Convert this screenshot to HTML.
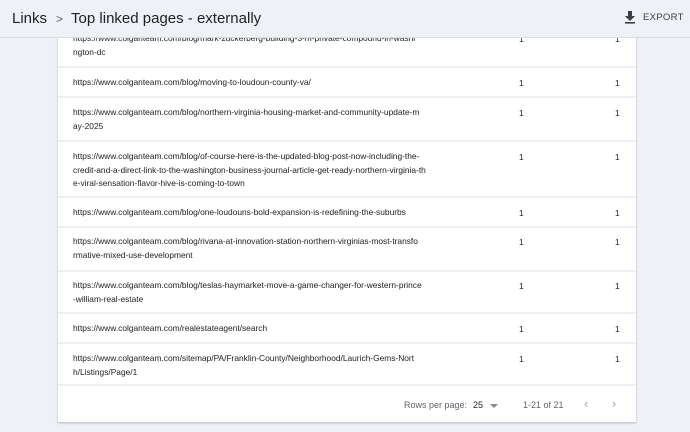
<!DOCTYPE html>
<html><head><style>
*{margin:0;padding:0;box-sizing:border-box}
body{width:690px;height:432px;background:#eef1f6;font-family:"Liberation Sans",sans-serif;position:relative;overflow:hidden;color:#202124}
.hdr{position:absolute;left:0;top:0;width:690px;height:38px;background:#eef1f6;border-bottom:1px solid #dadce0;z-index:2}
.crumb{position:absolute;left:12px;top:10px;font-size:15px;color:#202124}
.crumb .sep{color:#5f6368;font-size:12px;margin:0 8px 0 9px}
.exp{position:absolute;left:624px;top:12px;font-size:9.5px;color:#3c4043;letter-spacing:.3px}
.card{position:absolute;left:58px;top:20px;width:578px;height:402px;background:#fff;box-shadow:0 1px 2px rgba(0,0,0,.25)}
.row{position:absolute;left:58px;width:578px;border-bottom:2px solid #eceef0}
.row .u{position:absolute;left:15px;font-size:8.4px;line-height:13.5px;color:#202124;white-space:nowrap}
.row .a{position:absolute;left:461px;font-size:8.4px}
.row .b{position:absolute;left:557px;font-size:8.4px}
.foot{position:absolute;left:58px;top:386px;width:578px;font-size:9px;color:#5f6368}
</style></head><body>
<div class="card"></div>
<div class="row" style="top:20px;height:48px"><div class="u" style="top:12px">https://www.colganteam.com/blog/mark-zuckerberg-building-3-m-private-compound-in-washi<br>ngton-dc</div><div class="a" style="top:14px">1</div><div class="b" style="top:14px">1</div></div>
<div class="row" style="top:68px;height:30px"><div class="u" style="top:8px">https://www.colganteam.com/blog/moving-to-loudoun-county-va/</div><div class="a" style="top:10px">1</div><div class="b" style="top:10px">1</div></div>
<div class="row" style="top:98px;height:44px"><div class="u" style="top:8px">https://www.colganteam.com/blog/northern-virginia-housing-market-and-community-update-m<br>ay-2025</div><div class="a" style="top:10px">1</div><div class="b" style="top:10px">1</div></div>
<div class="row" style="top:142px;height:56px"><div class="u" style="top:8px">https://www.colganteam.com/blog/of-course-here-is-the-updated-blog-post-now-including-the-<br>credit-and-a-direct-link-to-the-washington-business-journal-article-get-ready-northern-virginia-th<br>e-viral-sensation-flavor-hive-is-coming-to-town</div><div class="a" style="top:10px">1</div><div class="b" style="top:10px">1</div></div>
<div class="row" style="top:198px;height:30px"><div class="u" style="top:8px">https://www.colganteam.com/blog/one-loudouns-bold-expansion-is-redefining-the-suburbs</div><div class="a" style="top:10px">1</div><div class="b" style="top:10px">1</div></div>
<div class="row" style="top:228px;height:44px"><div class="u" style="top:7px">https://www.colganteam.com/blog/rivana-at-innovation-station-northern-virginias-most-transfo<br>rmative-mixed-use-development</div><div class="a" style="top:9px">1</div><div class="b" style="top:9px">1</div></div>
<div class="row" style="top:272px;height:42px"><div class="u" style="top:7px">https://www.colganteam.com/blog/teslas-haymarket-move-a-game-changer-for-western-prince<br>-william-real-estate</div><div class="a" style="top:9px">1</div><div class="b" style="top:9px">1</div></div>
<div class="row" style="top:314px;height:30px"><div class="u" style="top:8px">https://www.colganteam.com/realestateagent/search</div><div class="a" style="top:10px">1</div><div class="b" style="top:10px">1</div></div>
<div class="row" style="top:344px;height:42px"><div class="u" style="top:8px">https://www.colganteam.com/sitemap/PA/Franklin-County/Neighborhood/Laurich-Gems-Nort<br>h/Listings/Page/1</div><div class="a" style="top:10px">1</div><div class="b" style="top:10px">1</div></div>
<div class="foot">
<span style="position:absolute;left:346px;top:14px">Rows per page:</span>
<span style="position:absolute;left:415px;top:14px;color:#202124">25</span>
<svg style="position:absolute;left:432px;top:18px" width="8" height="5" viewBox="0 0 8 5"><path d="M0 0h8L4 4z" fill="#888"/></svg>
<span style="position:absolute;left:465px;top:14px">1-21 of 21</span>
<span style="position:absolute;left:526px;top:10px;font-size:13px;color:#aaa">‹</span>
<span style="position:absolute;left:554px;top:10px;font-size:13px;color:#aaa">›</span>
</div>
<div class="hdr">
<div class="crumb">Links<span class="sep">&gt;</span>Top linked pages - externally</div>
<svg style="position:absolute;left:624px;top:11px" width="12" height="13" viewBox="0 0 12 13"><path d="M4 0h4v5h3L6 10 1 5h3z" fill="#3c4043"/><rect x="1" y="11" width="10" height="1.6" fill="#3c4043"/></svg>
<div class="exp" style="left:643px">EXPORT</div>
</div>
</body></html>
